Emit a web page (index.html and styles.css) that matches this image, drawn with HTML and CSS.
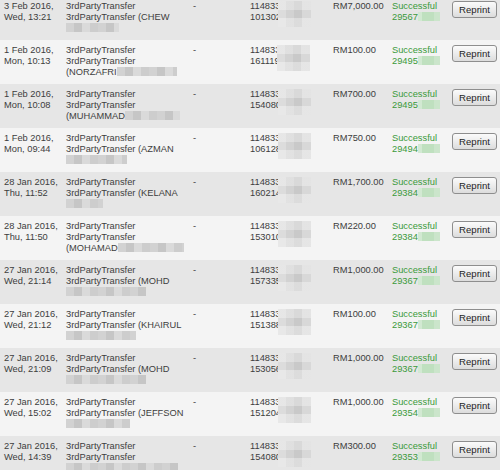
FILE: index.html
```html
<!DOCTYPE html>
<html>
<head>
<meta charset="utf-8">
<link rel="stylesheet" href="styles.css">
</head>
<body>
<div class="list">
  <div class="row">
    <div class="c">3 Feb 2016,<br>Wed, 13:21</div>
    <div class="c">3rdPartyTransfer<br>3rdPartyTransfer (CHEW<br><span class="blur" style="width:53px"></span></div>
    <div class="c">-</div>
    <div class="c acct"><div>114833<br>101302</div><span class="ablur"></span></div>
    <div class="c">RM7,000.00</div>
    <div class="c ok">Successful<br>29567<span class="gblur"></span></div>
    <div class="c"><button class="btn">Reprint</button></div>
  </div>
  <div class="row">
    <div class="c">1 Feb 2016,<br>Mon, 10:13</div>
    <div class="c">3rdPartyTransfer<br>3rdPartyTransfer<br>(NORZAFRI<span class="blur" style="width:60px"></span></div>
    <div class="c">-</div>
    <div class="c acct"><div>114833<br>161119</div><span class="ablur"></span></div>
    <div class="c">RM100.00</div>
    <div class="c ok">Successful<br>29495<span class="gblur"></span></div>
    <div class="c"><button class="btn">Reprint</button></div>
  </div>
  <div class="row">
    <div class="c">1 Feb 2016,<br>Mon, 10:08</div>
    <div class="c">3rdPartyTransfer<br>3rdPartyTransfer<br>(MUHAMMAD<span class="blur" style="width:55px"></span></div>
    <div class="c">-</div>
    <div class="c acct"><div>114833<br>154080</div><span class="ablur"></span></div>
    <div class="c">RM700.00</div>
    <div class="c ok">Successful<br>29495<span class="gblur"></span></div>
    <div class="c"><button class="btn">Reprint</button></div>
  </div>
  <div class="row">
    <div class="c">1 Feb 2016,<br>Mon, 09:44</div>
    <div class="c">3rdPartyTransfer<br>3rdPartyTransfer (AZMAN<br><span class="blur" style="width:61px"></span></div>
    <div class="c">-</div>
    <div class="c acct"><div>114833<br>106128</div><span class="ablur"></span></div>
    <div class="c">RM750.00</div>
    <div class="c ok">Successful<br>29494<span class="gblur"></span></div>
    <div class="c"><button class="btn">Reprint</button></div>
  </div>
  <div class="row">
    <div class="c">28 Jan 2016,<br>Thu, 11:52</div>
    <div class="c">3rdPartyTransfer<br>3rdPartyTransfer (KELANA<br><span class="blur" style="width:37px"></span></div>
    <div class="c">-</div>
    <div class="c acct"><div>114833<br>160214</div><span class="ablur"></span></div>
    <div class="c">RM1,700.00</div>
    <div class="c ok">Successful<br>29384<span class="gblur"></span></div>
    <div class="c"><button class="btn">Reprint</button></div>
  </div>
  <div class="row">
    <div class="c">28 Jan 2016,<br>Thu, 11:50</div>
    <div class="c">3rdPartyTransfer<br>3rdPartyTransfer<br>(MOHAMAD<span class="blur" style="width:66px"></span></div>
    <div class="c">-</div>
    <div class="c acct"><div>114833<br>153010</div><span class="ablur"></span></div>
    <div class="c">RM220.00</div>
    <div class="c ok">Successful<br>29384<span class="gblur"></span></div>
    <div class="c"><button class="btn">Reprint</button></div>
  </div>
  <div class="row">
    <div class="c">27 Jan 2016,<br>Wed, 21:14</div>
    <div class="c">3rdPartyTransfer<br>3rdPartyTransfer (MOHD<br><span class="blur" style="width:80px"></span></div>
    <div class="c">-</div>
    <div class="c acct"><div>114833<br>157335</div><span class="ablur"></span></div>
    <div class="c">RM1,000.00</div>
    <div class="c ok">Successful<br>29367<span class="gblur"></span></div>
    <div class="c"><button class="btn">Reprint</button></div>
  </div>
  <div class="row">
    <div class="c">27 Jan 2016,<br>Wed, 21:12</div>
    <div class="c">3rdPartyTransfer<br>3rdPartyTransfer (KHAIRUL<br><span class="blur" style="width:70px"></span></div>
    <div class="c">-</div>
    <div class="c acct"><div>114833<br>151388</div><span class="ablur"></span></div>
    <div class="c">RM100.00</div>
    <div class="c ok">Successful<br>29367<span class="gblur"></span></div>
    <div class="c"><button class="btn">Reprint</button></div>
  </div>
  <div class="row">
    <div class="c">27 Jan 2016,<br>Wed, 21:09</div>
    <div class="c">3rdPartyTransfer<br>3rdPartyTransfer (MOHD<br><span class="blur" style="width:80px"></span></div>
    <div class="c">-</div>
    <div class="c acct"><div>114833<br>153056</div><span class="ablur"></span></div>
    <div class="c">RM1,000.00</div>
    <div class="c ok">Successful<br>29367<span class="gblur"></span></div>
    <div class="c"><button class="btn">Reprint</button></div>
  </div>
  <div class="row">
    <div class="c">27 Jan 2016,<br>Wed, 15:02</div>
    <div class="c">3rdPartyTransfer<br>3rdPartyTransfer (JEFFSON<br><span class="blur" style="width:64px"></span></div>
    <div class="c">-</div>
    <div class="c acct"><div>114833<br>151204</div><span class="ablur"></span></div>
    <div class="c">RM1,000.00</div>
    <div class="c ok">Successful<br>29354<span class="gblur"></span></div>
    <div class="c"><button class="btn">Reprint</button></div>
  </div>
  <div class="row">
    <div class="c">27 Jan 2016,<br>Wed, 14:39</div>
    <div class="c">3rdPartyTransfer<br>3rdPartyTransfer<br><span class="blur" style="width:112px"></span></div>
    <div class="c">-</div>
    <div class="c acct"><div>114833<br>154080</div><span class="ablur"></span></div>
    <div class="c">RM300.00</div>
    <div class="c ok">Successful<br>29353<span class="gblur"></span></div>
    <div class="c"><button class="btn">Reprint</button></div>
  </div>
</div>
</body>
</html>
```

FILE: styles.css
```css
html, body {
  margin: 0;
  padding: 0;
  background: #f3f3f3;
}
body {
  font-family: "Liberation Sans", Arial, sans-serif;
  font-size: 9.3px;
  line-height: 11px;
  color: #3d3d3d;
  overflow: hidden;
}
.list {
  margin-top: -4px;
}
.row {
  display: grid;
  grid-template-columns: 62px 127px 57px 83px 59px 60px 1fr;
  height: 44px;
  padding-left: 4px;
  box-sizing: border-box;
}
.row:nth-child(odd) {
  background: #e6e6e6;
}
.row:nth-child(even) {
  background: #f4f4f4;
}
.c {
  padding-top: 5px;
  white-space: nowrap;
}
.acct {
  display: flex;
  align-items: flex-start;
}
.ablur {
  display: inline-block;
  width: 33px;
  height: 26px;
  margin-left: -3px;
  background:
    linear-gradient(180deg, rgba(255,255,255,0.3) 0 9px, rgba(0,0,0,0) 9px 17px, rgba(255,255,255,0.35) 17px),
    linear-gradient(90deg, #dcdcdc 0 8px, #d2d2d2 8px 16px, #c9c9c9 16px 24px, #d8d8d8 24px);
}
.blur {
  display: inline-block;
  height: 9px;
  vertical-align: -1px;
  background:
    repeating-linear-gradient(90deg, #d2d2d2 0 8px, #c6c6c6 8px 16px, #dadada 16px 24px, #cdcdcd 24px 32px);
}
.ok {
  color: #3a9a3a;
}
.gblur {
  display: inline-block;
  width: 22px;
  height: 9px;
  vertical-align: -1px;
  background: linear-gradient(90deg, #d2e9d2 0 4px, #bfe0bf 4px 16px, #cbe5cb 16px);
}
.btn {
  display: block;
  width: 45px;
  height: 17px;
  margin: 0;
  padding: 0;
  box-sizing: border-box;
  border: 1px solid #8e8e8e;
  border-radius: 3px;
  background: linear-gradient(180deg, #fbfbfb 0%, #ececec 50%, #dcdcdc 100%);
  font-family: "Liberation Sans", Arial, sans-serif;
  font-size: 9.6px;
  line-height: 15px;
  color: #1e1e1e;
}
```
